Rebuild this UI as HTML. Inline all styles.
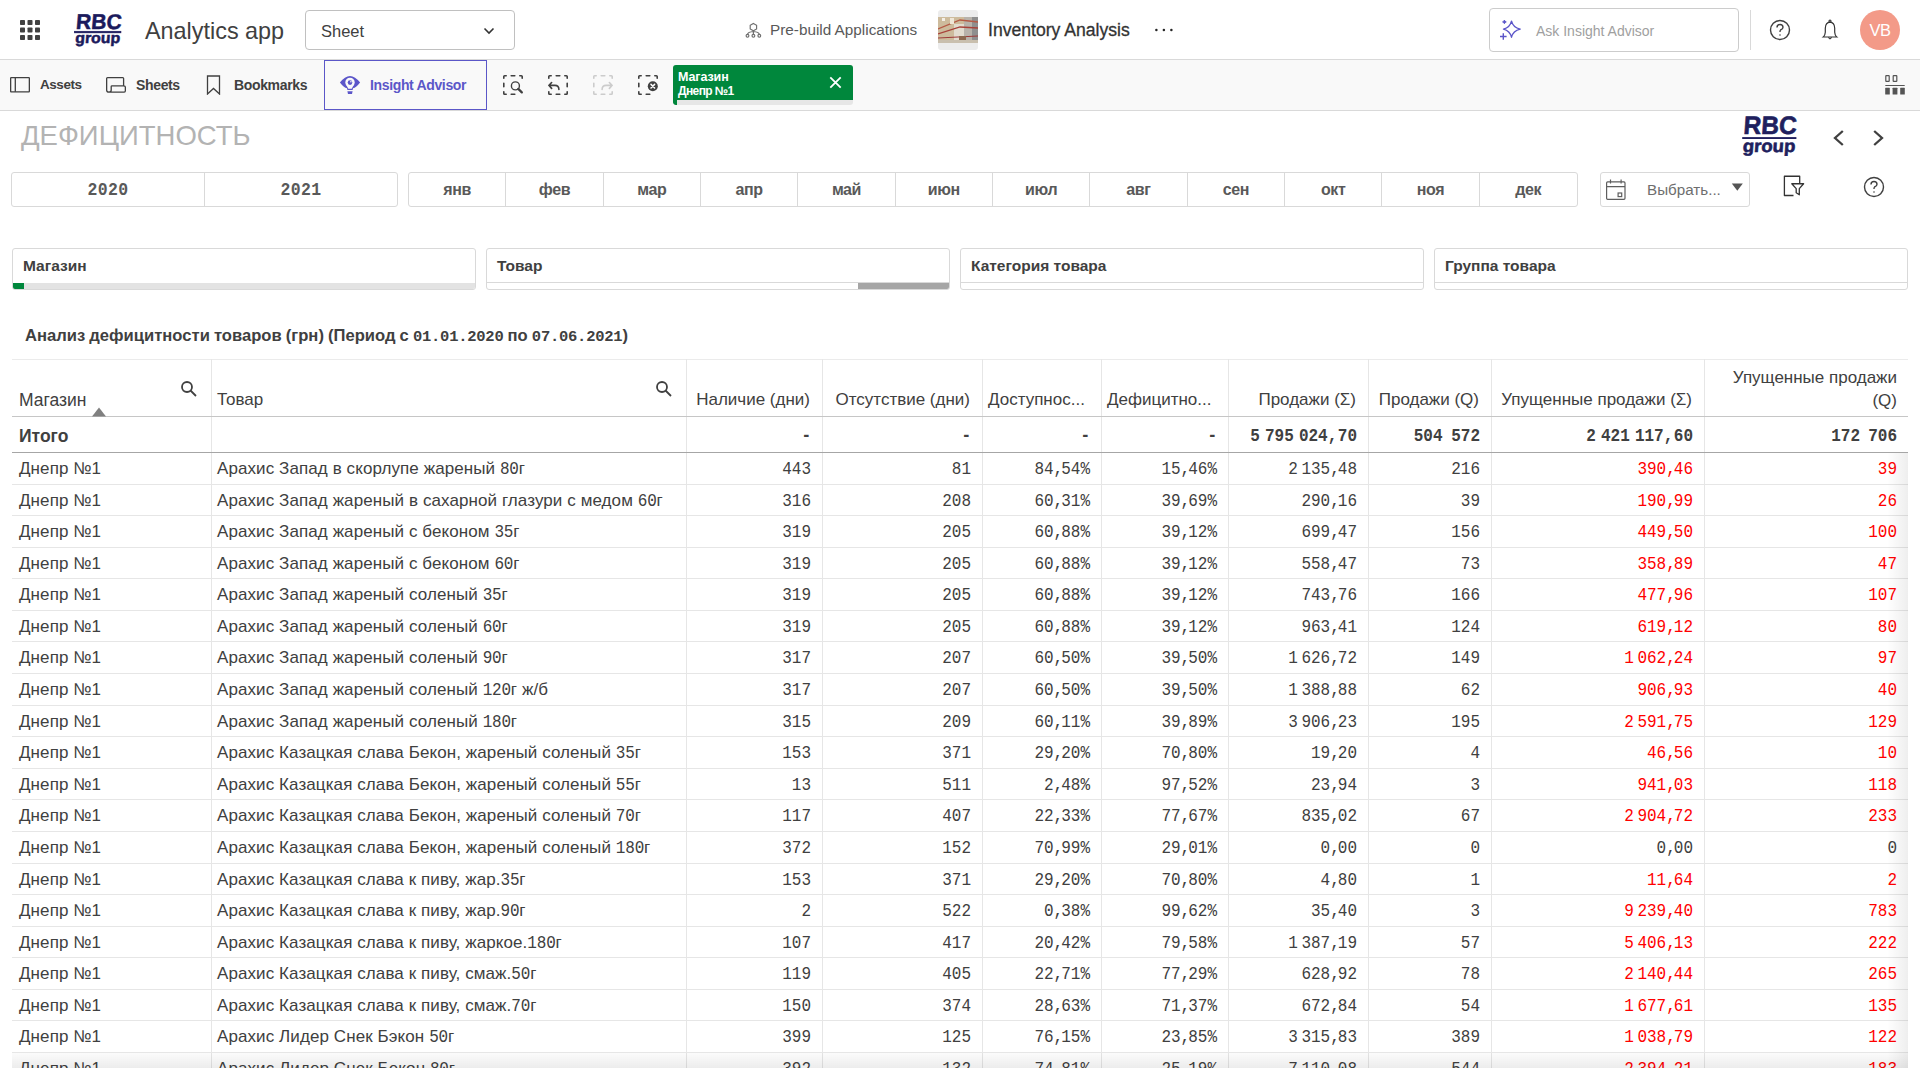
<!DOCTYPE html>
<html><head><meta charset="utf-8">
<style>
*{box-sizing:border-box;margin:0;padding:0}
html,body{width:1920px;height:1080px;overflow:hidden;background:#fff;font-family:"Liberation Sans",sans-serif;color:#404040}
.abs{position:absolute}
.topbar{position:absolute;left:0;top:0;width:1920px;height:60px;background:#fff;border-bottom:1px solid #d9d9d9}
.toolbar{position:absolute;left:0;top:60px;width:1920px;height:51px;background:#f9f9f9;border-bottom:1px solid #d9d9d9}
.tb-item{position:absolute;top:0;height:50px;line-height:50px;font-size:14px;font-weight:700;color:#404040;letter-spacing:-0.35px}
.sel{position:absolute;left:673px;top:65px;width:180px;height:40px;border-radius:3px;overflow:hidden;background:#e6e6e6}
.sel .g{position:absolute;left:0;top:0;width:180px;height:35px;background:#00873c}
.btnrow{position:absolute;top:172px;height:35px;border:1px solid #d9d9d9;border-radius:3px;background:#fff;display:flex}
.btnrow div{height:33px;line-height:33px;text-align:center;font-size:16px;font-weight:700;color:#595959;border-right:1px solid #d9d9d9;letter-spacing:-0.4px}
.btnrow div:last-child{border-right:none}
.fp{position:absolute;top:248px;height:42px;border:1px solid #d9d9d9;border-radius:3px;background:#fff;overflow:hidden}
.fp .lbl{position:absolute;left:10px;top:7.5px;font-size:15.5px;font-weight:700;color:#404040}
.fp .bar{position:absolute;left:0;bottom:0;width:100%;height:6px;background:#e3e3e3}
.hd{position:absolute;top:359px;height:57px;font-size:17px;color:#404040}
.row{position:absolute;left:0;width:1920px;height:31.58px}
.brow{border-bottom:1px solid #ebebeb}
.c{position:absolute;top:0;height:31.58px;line-height:31px;white-space:nowrap;overflow:hidden;font-size:17px;color:#404040}
.t{padding-left:7px;letter-spacing:0.09px}
.n{text-align:right;padding-right:11px;font-family:"Liberation Mono",monospace;font-size:16px}
.n span.v{display:inline-block;transform:scaleY(1.15);position:relative;top:1px}
.tot span.v{top:1.5px}
.r{color:#ff0000}
.dg{font-family:"Liberation Mono",monospace;font-size:16px;display:inline-block;transform:scaleY(1.12);letter-spacing:-0.2px}
.ts{letter-spacing:-6px}
.cm{letter-spacing:-2px}
.tot .ts{letter-spacing:-4.5px}
.tot .cm{letter-spacing:0.5px}
.hline{position:absolute;left:12px;width:1896px;height:1px;background:#e6e6e6}
.vl{position:absolute;top:359px;width:1px;height:709px;background:#e6e6e6}
</style></head><body>

<!-- TOP BAR -->
<div class="topbar"></div>
<svg class="abs" style="left:20px;top:20px" width="20" height="20" viewBox="0 0 20 20" fill="#404040">
<rect x="0" y="0" width="5" height="5" rx="0.8"/><rect x="7.5" y="0" width="5" height="5" rx="0.8"/><rect x="15" y="0" width="5" height="5" rx="0.8"/>
<rect x="0" y="7.5" width="5" height="5" rx="0.8"/><rect x="7.5" y="7.5" width="5" height="5" rx="0.8"/><rect x="15" y="7.5" width="5" height="5" rx="0.8"/>
<rect x="0" y="15" width="5" height="5" rx="0.8"/><rect x="7.5" y="15" width="5" height="5" rx="0.8"/><rect x="15" y="15" width="5" height="5" rx="0.8"/>
</svg>
<svg class="abs" style="left:60px;top:0" width="80" height="60" viewBox="60 0 80 60">
<g fill="#1b1a5c" stroke="#1b1a5c" stroke-width="0.5" font-family="Liberation Sans" font-weight="700">
<text x="75.5" y="28.8" font-size="21.3" textLength="45.5" lengthAdjust="spacingAndGlyphs" transform="skewX(-5) translate(2.6 0)">RBC</text>
<rect x="74.3" y="31.2" width="46.7" height="1.7"/>
<text x="75" y="43.4" font-size="15" textLength="45" lengthAdjust="spacingAndGlyphs" transform="skewX(-4) translate(3 0)">group</text>
</g></svg>
<div class="abs" style="left:145px;top:15px;font-size:23.4px;line-height:32px;color:#404040">Analytics app</div>
<div class="abs" style="left:305px;top:10px;width:210px;height:40px;border:1px solid #c0c0c0;border-radius:4px;background:#fff"></div>
<div class="abs" style="left:321px;top:20px;font-size:16.5px;line-height:22px;color:#404040">Sheet</div>
<svg class="abs" style="left:483px;top:25.7px" width="12" height="10" viewBox="0 0 12 10"><path d="M1.5 2.5 L6 7 L10.5 2.5" stroke="#333" stroke-width="1.6" fill="none"/></svg>

<svg class="abs" style="left:745px;top:21px" width="17" height="18" viewBox="0 0 17 18" fill="none" stroke="#6e6e6e" stroke-width="1.15">
<path d="M8.4 2.5 L11.6 4.3 V8 L8.4 9.8 L5.2 8 V4.3 Z"/><path d="M8.4 9.8 V13.4 M8.4 10.5 Q3 11 2.5 13.4 M8.4 10.5 Q13.8 11 14.3 13.4"/>
<circle cx="2.5" cy="14.8" r="1.4"/><circle cx="8.4" cy="14.8" r="1.4"/><circle cx="14.3" cy="14.8" r="1.4"/>
</svg>
<div class="abs" style="left:770px;top:20px;font-size:15.3px;line-height:20px;color:#595959">Pre-build Applications</div>
<svg class="abs" style="left:938px;top:10px" width="40" height="40" viewBox="0 0 40 40">
<rect x="0" y="0" width="40" height="40" rx="3" fill="#ececec"/>
<rect x="0" y="7" width="40" height="26" fill="#cdbb9c"/>
<rect x="26" y="7" width="14" height="26" fill="#b8b2aa"/>
<rect x="34" y="7" width="6" height="26" fill="#8f8f8f"/>
<rect x="16" y="14" width="10" height="19" fill="#e2dccf"/>
<path d="M0 19 L22 10 L40 12" stroke="#b55a45" stroke-width="1.3" fill="none"/>
<path d="M0 24 L22 17 L40 18" stroke="#a8423a" stroke-width="1.3" fill="none"/>
<path d="M0 28 L40 26" stroke="#9e3b3a" stroke-width="1.1" fill="none"/>
<rect x="21" y="26" width="7" height="7" fill="#8d6a50"/>
<rect x="0" y="30" width="40" height="3" fill="#c9bfae"/>
<rect x="4" y="8" width="3" height="3" fill="#f4efe6"/>
<rect x="12" y="8" width="4" height="6" fill="#efe6d6"/>
</svg>
<div class="abs" style="left:988px;top:19px;font-size:17.6px;line-height:22px;color:#333;-webkit-text-stroke:0.3px #333">Inventory Analysis</div>
<svg class="abs" style="left:1150px;top:25px" width="30" height="10" viewBox="0 0 30 10" fill="#262626"><circle cx="6.4" cy="5" r="1.25"/><circle cx="13.9" cy="5" r="1.25"/><circle cx="21.4" cy="5" r="1.25"/></svg>

<div class="abs" style="left:1489px;top:8px;width:250px;height:44px;border:1px solid #cccccc;border-radius:4px;background:#fff"></div>
<svg class="abs" style="left:1490px;top:10px" width="40" height="40" viewBox="0 0 40 40" fill="none" stroke="#5b55c9" stroke-width="1.4" stroke-linejoin="round">
<path d="M21.5 11.1 Q23.1 17.5 30.2 19.1 Q23.1 20.7 21.5 27.2 Q19.9 20.7 13.5 19.1 Q19.9 17.5 21.5 11.1 Z"/>
<path d="M13.3 23.2 V29.8 M10 26.5 H16.6"/>
<path d="M14.4 10 Q14.7 11.6 16.3 11.9 Q14.7 12.2 14.4 13.8 Q14.1 12.2 12.5 11.9 Q14.1 11.6 14.4 10 Z" fill="#5b55c9" stroke-width="0.8"/>
</svg>
<div class="abs" style="left:1536px;top:21px;font-size:14px;line-height:20px;color:#a0a0a0">Ask Insight Advisor</div>
<div class="abs" style="left:1750px;top:10px;width:1px;height:40px;background:#d9d9d9"></div>
<svg class="abs" style="left:1769px;top:19px" width="22" height="22" viewBox="0 0 22 22" fill="none" stroke="#404040" stroke-width="1.4">
<circle cx="11" cy="11" r="9.5"/><path d="M8 8.5 Q8 5.5 11 5.5 Q14 5.5 14 8.3 Q14 10.2 11.5 11 Q11 11.3 11 13"/><circle cx="11" cy="16" r="0.8" fill="#404040" stroke="none"/>
</svg>
<svg class="abs" style="left:1819px;top:18px" width="22" height="24" viewBox="0 0 22 24" fill="none" stroke="#333" stroke-width="1.2">
<path d="M11 4.2 Q6.6 4.4 6.3 10.2 V14.3 Q6.1 17.6 4.3 19 H17.7 Q15.9 17.6 15.7 14.3 V10.2 Q15.4 4.4 11 4.2 Z"/><ellipse cx="11" cy="3.2" rx="1" ry="1.2"/><path d="M9.5 19.3 Q11 22.3 12.5 19.3"/>
</svg>
<div class="abs" style="left:1860px;top:10px;width:40px;height:40px;border-radius:20px;background:#f39a88;color:#fff;font-size:16.5px;line-height:40px;text-align:center;letter-spacing:-0.5px">VB</div>

<!-- TOOLBAR -->
<div class="toolbar"></div>
<svg class="abs" style="left:10px;top:77px" width="20" height="16" viewBox="0 0 20 16" fill="none" stroke="#404040" stroke-width="1.3"><rect x="0.65" y="0.65" width="18.7" height="14.2" rx="0.6"/><path d="M5.3 0.65 V14.85"/></svg>
<div class="tb-item" style="left:40px;top:60px;font-size:13.5px;letter-spacing:-0.45px">Assets</div>
<svg class="abs" style="left:106px;top:77px" width="20" height="16" viewBox="0 0 20 16" fill="none" stroke="#404040" stroke-width="1.3"><path d="M0.65 13.3 V1.5 Q0.65 0.65 1.5 0.65 H16.8 Q17.6 0.65 17.6 1.5 V8.8 H6 Q5.2 8.8 5.2 9.6 V13.3 Q5.2 15.1 2.9 15.1 Q0.65 15.1 0.65 13.3 Z M2.9 15.1 H18.2 Q19.35 15.1 19.35 13.8 V10 Q19.35 8.8 17.6 8.8"/></svg>
<div class="tb-item" style="left:136px;top:60px">Sheets</div>
<svg class="abs" style="left:206px;top:75px" width="15" height="20" viewBox="0 0 15 20" fill="none" stroke="#404040" stroke-width="1.3"><path d="M1.5 1 H13.5 V19 L7.5 13.5 L1.5 19 Z"/></svg>
<div class="tb-item" style="left:234px;top:60px">Bookmarks</div>
<div class="abs" style="left:324px;top:60px;width:163px;height:50px;border:1px solid #5b57c8;background:#f9f9f9"></div>
<svg class="abs" style="left:335px;top:72px" width="30" height="26" viewBox="0 0 30 26">
<path d="M4.9 10.5 Q10 3.9 15 3.9 Q20 3.9 25.1 10.5 Q21.2 15.6 18 16.3 L17.6 17.9 H12.4 L12 16.3 Q8.8 15.6 4.9 10.5 Z" fill="#5b55c9"/>
<circle cx="15" cy="10.4" r="4.7" fill="#f9f9f9"/><path d="M11.3 13 L13.3 16.7 H16.7 L18.7 13 Z" fill="#f9f9f9"/>
<circle cx="15" cy="10.6" r="2.3" fill="#5b55c9"/><circle cx="15.9" cy="9.7" r="0.8" fill="#f9f9f9"/>
<path d="M12.4 19.2 H17.6 L17 22 H13 Z" fill="#5b55c9"/>
</svg>
<div class="tb-item" style="left:370px;top:60px;color:#5b57c8">Insight Advisor</div>

<svg class="abs" style="left:503px;top:75px" width="20" height="20" viewBox="0 0 20 20" fill="none" stroke="#404040" stroke-width="1.6" stroke-linecap="round">
<path d="M0.8 3.2 V1.6 Q0.8 0.8 1.6 0.8 H3.2 M8.2 0.8 H11.8 M16.8 0.8 H18.4 Q19.2 0.8 19.2 1.6 V3.2 M11.8 19.2 H8.2 M3.2 19.2 H1.6 Q0.8 19.2 0.8 18.4 V16.8 M0.8 11.8 V8.2 "/><circle cx="12.4" cy="10.9" r="4" stroke-width="1.4"/><path d="M15.3 13.9 L18.8 17.4" stroke-width="2.2"/></svg>
<svg class="abs" style="left:548px;top:75px" width="20" height="20" viewBox="0 0 20 20" fill="none" stroke="#404040" stroke-width="1.6" stroke-linecap="round">
<path d="M0.8 3.2 V1.6 Q0.8 0.8 1.6 0.8 H3.2 M8.2 0.8 H11.8 M16.8 0.8 H18.4 Q19.2 0.8 19.2 1.6 V3.2 M19.2 8.2 V11.8 M19.2 16.8 V18.4 Q19.2 19.2 18.4 19.2 H16.8 M11.8 19.2 H8.2 M3.2 19.2 H1.6 Q0.8 19.2 0.8 18.4 V16.8 "/><path d="M3.6 7.5 L0.9 10.4 L3.6 13.4 M0.9 10.4 H7 Q10.8 10.4 10.9 14.4"/></svg>
<svg class="abs" style="left:593px;top:75px" width="20" height="20" viewBox="0 0 20 20" fill="none" stroke="#cccccc" stroke-width="1.6" stroke-linecap="round">
<path d="M0.8 3.2 V1.6 Q0.8 0.8 1.6 0.8 H3.2 M8.2 0.8 H11.8 M16.8 0.8 H18.4 Q19.2 0.8 19.2 1.6 V3.2 M19.2 16.8 V18.4 Q19.2 19.2 18.4 19.2 H16.8 M11.8 19.2 H8.2 M3.2 19.2 H1.6 Q0.8 19.2 0.8 18.4 V16.8 M0.8 11.8 V8.2 "/><path d="M16.4 7.5 L19.1 10.4 L16.4 13.4 M19.1 10.4 H13 Q9.2 10.4 9.1 14.4"/></svg>
<svg class="abs" style="left:638px;top:75px" width="22" height="22" viewBox="0 0 22 22" fill="none" stroke="#404040" stroke-width="1.6" stroke-linecap="round">
<path d="M0.8 3.2 V1.6 Q0.8 0.8 1.6 0.8 H3.2 M8.2 0.8 H11.8 M16.8 0.8 H18.4 Q19.2 0.8 19.2 1.6 V3.2 M11.8 19.2 H8.2 M3.2 19.2 H1.6 Q0.8 19.2 0.8 18.4 V16.8 M0.8 11.8 V8.2 "/><circle cx="14.8" cy="11.2" r="5" fill="#404040" stroke="none"/><path d="M13 9.4 L16.6 13 M16.6 9.4 L13 13" stroke="#fff" stroke-width="1.5"/></svg>
<div class="sel"><div class="g"></div><div class="abs" style="left:0;top:35px;width:4px;height:5px;background:#00873c;border-radius:0 0 0 2px"></div></div>
<div class="abs" style="left:678px;top:70px;font-size:12.5px;line-height:15px;font-weight:700;color:#fff;letter-spacing:-0.1px">Магазин</div>
<div class="abs" style="left:678px;top:84px;font-size:12px;line-height:14px;font-weight:700;color:#fff;letter-spacing:-0.6px">Днепр №1</div>
<svg class="abs" style="left:829px;top:76px" width="13" height="13" viewBox="0 0 13 13" stroke="#fff" stroke-width="1.8"><path d="M1.3 1.3 L11.7 11.7 M11.7 1.3 L1.3 11.7"/></svg>

<svg class="abs" style="left:1884px;top:75px" width="22" height="21" viewBox="0 0 22 21" fill="#555">
<rect x="1.8" y="0.6" width="3.4" height="5.8" rx="0.5" fill="none" stroke="#555" stroke-width="1.2"/><rect x="9.2" y="0.6" width="3.6" height="5.8" rx="0.5" fill="none" stroke="#555" stroke-width="1.2"/>
<rect x="1.2" y="9.9" width="19.6" height="1.2" rx="0.5"/><rect x="1.2" y="12.8" width="4.6" height="6.8" rx="0.4"/><rect x="8.6" y="12.8" width="4.8" height="6.8" rx="0.4"/><rect x="16.2" y="12.8" width="4.6" height="6.8" rx="0.4"/>
</svg>

<!-- SHEET HEADER -->
<div class="abs" style="left:21px;top:119px;font-size:27.5px;line-height:34px;color:#b3b3b3">ДЕФИЦИТНОСТЬ</div>
<svg class="abs" style="left:1730px;top:110px" width="80" height="55" viewBox="1730 110 80 55">
<g fill="#201f5e" stroke="#201f5e" stroke-width="0.6" font-family="Liberation Sans" font-weight="700">
<text x="1743" y="134.2" font-size="25.2" textLength="53.3" lengthAdjust="spacingAndGlyphs" transform="translate(9.38 0) skewX(-4)">RBC</text>
<rect x="1742.2" y="137.1" width="54.2" height="1.9" stroke="none"/>
<text x="1742.5" y="151.7" font-size="17.5" textLength="52.5" lengthAdjust="spacingAndGlyphs" transform="skewX(-4) translate(10.6 0)">group</text>
</g></svg>
<svg class="abs" style="left:1830px;top:128px" width="18" height="20" viewBox="0 0 18 20" fill="none" stroke="#404040" stroke-width="2.3"><path d="M12.8 3 L5 10 L12.8 17"/></svg>
<svg class="abs" style="left:1869px;top:128px" width="18" height="20" viewBox="0 0 18 20" fill="none" stroke="#404040" stroke-width="2.3"><path d="M5.2 3 L13 10 L5.2 17"/></svg>

<div class="btnrow" style="left:11px;width:387px">
 <div style="width:193px;font-family:'Liberation Mono';font-size:16.5px;padding-top:0px;letter-spacing:0.4px"><span style="display:inline-block;transform:scaleY(1.12)">2020</span></div><div style="width:192px;font-family:'Liberation Mono';font-size:16.5px;padding-top:0px;letter-spacing:0.4px"><span style="display:inline-block;transform:scaleY(1.12)">2021</span></div>
</div>
<div class="btnrow" style="left:408px;width:1170px">
 <div style="width:97.5px">янв</div><div style="width:97.5px">фев</div><div style="width:97.5px">мар</div><div style="width:97.5px">апр</div><div style="width:97.5px">май</div><div style="width:97.5px">июн</div><div style="width:97.5px">июл</div><div style="width:97.5px">авг</div><div style="width:97.5px">сен</div><div style="width:97.5px">окт</div><div style="width:97.5px">ноя</div><div style="width:97.5px">дек</div>
</div>
<div class="abs" style="left:1600px;top:172px;width:150px;height:35px;border:1px solid #d9d9d9;border-radius:3px;background:#fff"></div>
<svg class="abs" style="left:1605px;top:179px" width="22" height="22" viewBox="0 0 22 22" fill="none" stroke="#5e5e5e" stroke-width="1.2"><rect x="1.6" y="2.9" width="18.4" height="17.4" rx="1"/><path d="M1.6 7.6 H20 M5.5 0.6 V4.5 M16.1 0.6 V4.5"/><rect x="13.1" y="14" width="3.6" height="3.6"/></svg>
<div class="abs" style="left:1647px;top:179.5px;font-size:15.2px;line-height:20px;color:#6e6e6e">Выбрать...</div>
<svg class="abs" style="left:1731px;top:183px" width="12" height="9" viewBox="0 0 12 9" fill="#555"><path d="M0.8 0.4 H11.8 L6.3 7.8 Z"/></svg>
<svg class="abs" style="left:1783px;top:175px" width="22" height="22" viewBox="0 0 22 22" fill="none" stroke="#333" stroke-width="1.3" stroke-linejoin="round"><path d="M16.7 8.6 V1.25 H1.4 V20.5 H10.5"/><path d="M8.8 8.75 H20.6 L16.3 13.6 V19.8 L13.2 17.8 V13.6 Z"/></svg>
<svg class="abs" style="left:1863px;top:176px" width="22" height="22" viewBox="0 0 22 22" fill="none" stroke="#404040" stroke-width="1.4">
<circle cx="11" cy="11" r="9.5"/><path d="M8 8.5 Q8 5.5 11 5.5 Q14 5.5 14 8.3 Q14 10.2 11.5 11 Q11 11.3 11 13"/><circle cx="11" cy="16" r="0.8" fill="#404040" stroke="none"/>
</svg>

<!-- FILTER PANES -->
<div class="fp" style="left:12px;width:464px"><div class="lbl">Магазин</div><div class="bar"></div><div class="abs" style="left:0;bottom:0;width:11px;height:6px;background:#00873c"></div></div>
<div class="fp" style="left:486px;width:464px"><div class="lbl">Товар</div><div class="abs" style="left:0;bottom:6px;width:100%;height:1px;background:#d9d9d9"></div><div class="abs" style="left:371px;bottom:0;width:92px;height:6px;background:#a6a6a6"></div></div>
<div class="fp" style="left:960px;width:464px"><div class="lbl">Категория товара</div><div class="abs" style="left:0;bottom:6px;width:100%;height:1px;background:#d9d9d9"></div></div>
<div class="fp" style="left:1434px;width:474px"><div class="lbl">Группа товара</div><div class="abs" style="left:0;bottom:6px;width:100%;height:1px;background:#d9d9d9"></div></div>

<!-- TABLE -->
<div class="abs" style="left:25px;top:324.5px;font-size:16.6px;line-height:22px;font-weight:700;color:#404040;word-spacing:-0.5px">Анализ дефицитности товаров (грн) (Период с <span style="font-family:'Liberation Mono';font-size:15.5px;letter-spacing:-0.25px">01.01.2020</span> по <span style="font-family:'Liberation Mono';font-size:15.5px;letter-spacing:-0.25px">07.06.2021</span>)</div>

<div class="hline" style="top:359px;background:#ebebeb"></div>
<div class="vl" style="left:211px"></div><div class="vl" style="left:686px"></div><div class="vl" style="left:822px"></div><div class="vl" style="left:982px"></div><div class="vl" style="left:1101px"></div><div class="vl" style="left:1228px"></div><div class="vl" style="left:1368px"></div><div class="vl" style="left:1491px"></div><div class="vl" style="left:1704px"></div>
<div class="hline" style="top:416px;background:#c6c6c6"></div>
<div class="hline" style="top:452px;background:#a6a6a6"></div>

<div class="abs" style="left:19px;top:390px;font-size:17.5px;line-height:20px">Магазин</div>
<svg class="abs" style="left:92px;top:407px" width="14" height="10" viewBox="0 0 14 10" fill="#808080"><path d="M0 9.5 L7 0.5 L14 9.5 Z"/></svg>
<svg class="abs" style="left:180px;top:380px" width="18" height="18" viewBox="0 0 18 18" fill="none" stroke="#404040" stroke-width="1.8"><circle cx="7" cy="7" r="5"/><path d="M10.5 10.5 L16 16"/></svg>
<div class="abs" style="left:217px;top:390px;font-size:17px;line-height:20px">Товар</div>
<svg class="abs" style="left:655px;top:380px" width="18" height="18" viewBox="0 0 18 18" fill="none" stroke="#404040" stroke-width="1.8"><circle cx="7" cy="7" r="5"/><path d="M10.5 10.5 L16 16"/></svg>
<div class="abs" style="left:686px;top:390px;width:136px;padding-right:12px;text-align:right;font-size:17px;line-height:20px">Наличие (дни)</div>
<div class="abs" style="left:822px;top:390px;width:160px;padding-right:12px;text-align:right;font-size:17px;line-height:20px">Отсутствие (дни)</div>
<div class="abs" style="left:982px;top:390px;width:119px;padding-left:6px;font-size:17px;line-height:20px;white-space:nowrap">Доступнос...</div>
<div class="abs" style="left:1101px;top:390px;width:127px;padding-left:6px;font-size:17px;line-height:20px;white-space:nowrap">Дефицитно...</div>
<div class="abs" style="left:1228px;top:390px;width:140px;padding-right:12px;text-align:right;font-size:17px;line-height:20px">Продажи (Σ)</div>
<div class="abs" style="left:1368px;top:390px;width:123px;padding-right:12px;text-align:right;font-size:17px;line-height:20px">Продажи (Q)</div>
<div class="abs" style="left:1491px;top:390px;width:213px;padding-right:12px;text-align:right;font-size:17px;line-height:20px">Упущенные продажи (Σ)</div>
<div class="abs" style="left:1704px;top:366px;width:204px;padding-right:11px;text-align:right;font-size:17px;line-height:23px">Упущенные продажи<br>(Q)</div>

<div class="abs" style="left:19px;top:426px;font-size:17.5px;line-height:20px;font-weight:700">Итого</div>
<div class="row tot" style="top:417px;height:35px;left:0">
<div class="c n" style="left:686px;width:136px;height:35px;line-height:35px;font-weight:700"><span class="v">-</span></div>
<div class="c n" style="left:822px;width:160px;height:35px;line-height:35px;font-weight:700"><span class="v">-</span></div>
<div class="c n" style="left:982px;width:119px;height:35px;line-height:35px;font-weight:700"><span class="v">-</span></div>
<div class="c n" style="left:1101px;width:127px;height:35px;line-height:35px;font-weight:700"><span class="v">-</span></div>
<div class="c n" style="left:1228px;width:140px;height:35px;line-height:35px;font-weight:700"><span class="v">5<span class="ts"> </span>795<span class="ts"> </span>024<span class="cm">,</span>70</span></div>
<div class="c n" style="left:1368px;width:123px;height:35px;line-height:35px;font-weight:700"><span class="v">504<span class="ts" style="letter-spacing:-1px"> </span>572</span></div>
<div class="c n" style="left:1491px;width:213px;height:35px;line-height:35px;font-weight:700"><span class="v">2<span class="ts"> </span>421<span class="ts"> </span>117<span class="cm">,</span>60</span></div>
<div class="c n" style="left:1704px;width:204px;height:35px;line-height:35px;font-weight:700"><span class="v">172<span class="ts" style="letter-spacing:-1.5px"> </span>706</span></div>
</div>

<div class="abs" style="left:0;top:0;width:1920px;height:1068px;overflow:hidden">
<div class="row" style="top:453.00px"><div class="c t" style="left:12px;width:199px">Днепр №1</div><div class="c t" style="left:211px;width:475px;padding-left:6px">Арахис Запад в скорлупе жареный <span class="dg">80</span>г</div><div class="c n" style="left:686px;width:136px"><span class="v">443</span></div><div class="c n" style="left:822px;width:160px"><span class="v">81</span></div><div class="c n" style="left:982px;width:119px"><span class="v">84<span class="cm">,</span>54%</span></div><div class="c n" style="left:1101px;width:127px"><span class="v">15<span class="cm">,</span>46%</span></div><div class="c n" style="left:1228px;width:140px"><span class="v">2<span class="ts"> </span>135<span class="cm">,</span>48</span></div><div class="c n" style="left:1368px;width:123px"><span class="v">216</span></div><div class="c n r" style="left:1491px;width:213px"><span class="v">390<span class="cm">,</span>46</span></div><div class="c n r" style="left:1704px;width:204px"><span class="v">39</span></div></div>
<div class="hline" style="top:483.58px"></div>
<div class="row" style="top:484.58px"><div class="c t" style="left:12px;width:199px">Днепр №1</div><div class="c t" style="left:211px;width:475px;padding-left:6px">Арахис Запад жареный в сахарной глазури с медом <span class="dg">60</span>г</div><div class="c n" style="left:686px;width:136px"><span class="v">316</span></div><div class="c n" style="left:822px;width:160px"><span class="v">208</span></div><div class="c n" style="left:982px;width:119px"><span class="v">60<span class="cm">,</span>31%</span></div><div class="c n" style="left:1101px;width:127px"><span class="v">39<span class="cm">,</span>69%</span></div><div class="c n" style="left:1228px;width:140px"><span class="v">290<span class="cm">,</span>16</span></div><div class="c n" style="left:1368px;width:123px"><span class="v">39</span></div><div class="c n r" style="left:1491px;width:213px"><span class="v">190<span class="cm">,</span>99</span></div><div class="c n r" style="left:1704px;width:204px"><span class="v">26</span></div></div>
<div class="hline" style="top:515.16px"></div>
<div class="row" style="top:516.16px"><div class="c t" style="left:12px;width:199px">Днепр №1</div><div class="c t" style="left:211px;width:475px;padding-left:6px">Арахис Запад жареный с беконом <span class="dg">35</span>г</div><div class="c n" style="left:686px;width:136px"><span class="v">319</span></div><div class="c n" style="left:822px;width:160px"><span class="v">205</span></div><div class="c n" style="left:982px;width:119px"><span class="v">60<span class="cm">,</span>88%</span></div><div class="c n" style="left:1101px;width:127px"><span class="v">39<span class="cm">,</span>12%</span></div><div class="c n" style="left:1228px;width:140px"><span class="v">699<span class="cm">,</span>47</span></div><div class="c n" style="left:1368px;width:123px"><span class="v">156</span></div><div class="c n r" style="left:1491px;width:213px"><span class="v">449<span class="cm">,</span>50</span></div><div class="c n r" style="left:1704px;width:204px"><span class="v">100</span></div></div>
<div class="hline" style="top:546.74px"></div>
<div class="row" style="top:547.74px"><div class="c t" style="left:12px;width:199px">Днепр №1</div><div class="c t" style="left:211px;width:475px;padding-left:6px">Арахис Запад жареный с беконом <span class="dg">60</span>г</div><div class="c n" style="left:686px;width:136px"><span class="v">319</span></div><div class="c n" style="left:822px;width:160px"><span class="v">205</span></div><div class="c n" style="left:982px;width:119px"><span class="v">60<span class="cm">,</span>88%</span></div><div class="c n" style="left:1101px;width:127px"><span class="v">39<span class="cm">,</span>12%</span></div><div class="c n" style="left:1228px;width:140px"><span class="v">558<span class="cm">,</span>47</span></div><div class="c n" style="left:1368px;width:123px"><span class="v">73</span></div><div class="c n r" style="left:1491px;width:213px"><span class="v">358<span class="cm">,</span>89</span></div><div class="c n r" style="left:1704px;width:204px"><span class="v">47</span></div></div>
<div class="hline" style="top:578.32px"></div>
<div class="row" style="top:579.32px"><div class="c t" style="left:12px;width:199px">Днепр №1</div><div class="c t" style="left:211px;width:475px;padding-left:6px">Арахис Запад жареный соленый <span class="dg">35</span>г</div><div class="c n" style="left:686px;width:136px"><span class="v">319</span></div><div class="c n" style="left:822px;width:160px"><span class="v">205</span></div><div class="c n" style="left:982px;width:119px"><span class="v">60<span class="cm">,</span>88%</span></div><div class="c n" style="left:1101px;width:127px"><span class="v">39<span class="cm">,</span>12%</span></div><div class="c n" style="left:1228px;width:140px"><span class="v">743<span class="cm">,</span>76</span></div><div class="c n" style="left:1368px;width:123px"><span class="v">166</span></div><div class="c n r" style="left:1491px;width:213px"><span class="v">477<span class="cm">,</span>96</span></div><div class="c n r" style="left:1704px;width:204px"><span class="v">107</span></div></div>
<div class="hline" style="top:609.90px"></div>
<div class="row" style="top:610.90px"><div class="c t" style="left:12px;width:199px">Днепр №1</div><div class="c t" style="left:211px;width:475px;padding-left:6px">Арахис Запад жареный соленый <span class="dg">60</span>г</div><div class="c n" style="left:686px;width:136px"><span class="v">319</span></div><div class="c n" style="left:822px;width:160px"><span class="v">205</span></div><div class="c n" style="left:982px;width:119px"><span class="v">60<span class="cm">,</span>88%</span></div><div class="c n" style="left:1101px;width:127px"><span class="v">39<span class="cm">,</span>12%</span></div><div class="c n" style="left:1228px;width:140px"><span class="v">963<span class="cm">,</span>41</span></div><div class="c n" style="left:1368px;width:123px"><span class="v">124</span></div><div class="c n r" style="left:1491px;width:213px"><span class="v">619<span class="cm">,</span>12</span></div><div class="c n r" style="left:1704px;width:204px"><span class="v">80</span></div></div>
<div class="hline" style="top:641.48px"></div>
<div class="row" style="top:642.48px"><div class="c t" style="left:12px;width:199px">Днепр №1</div><div class="c t" style="left:211px;width:475px;padding-left:6px">Арахис Запад жареный соленый <span class="dg">90</span>г</div><div class="c n" style="left:686px;width:136px"><span class="v">317</span></div><div class="c n" style="left:822px;width:160px"><span class="v">207</span></div><div class="c n" style="left:982px;width:119px"><span class="v">60<span class="cm">,</span>50%</span></div><div class="c n" style="left:1101px;width:127px"><span class="v">39<span class="cm">,</span>50%</span></div><div class="c n" style="left:1228px;width:140px"><span class="v">1<span class="ts"> </span>626<span class="cm">,</span>72</span></div><div class="c n" style="left:1368px;width:123px"><span class="v">149</span></div><div class="c n r" style="left:1491px;width:213px"><span class="v">1<span class="ts"> </span>062<span class="cm">,</span>24</span></div><div class="c n r" style="left:1704px;width:204px"><span class="v">97</span></div></div>
<div class="hline" style="top:673.06px"></div>
<div class="row" style="top:674.06px"><div class="c t" style="left:12px;width:199px">Днепр №1</div><div class="c t" style="left:211px;width:475px;padding-left:6px">Арахис Запад жареный соленый <span class="dg">120</span>г ж/б</div><div class="c n" style="left:686px;width:136px"><span class="v">317</span></div><div class="c n" style="left:822px;width:160px"><span class="v">207</span></div><div class="c n" style="left:982px;width:119px"><span class="v">60<span class="cm">,</span>50%</span></div><div class="c n" style="left:1101px;width:127px"><span class="v">39<span class="cm">,</span>50%</span></div><div class="c n" style="left:1228px;width:140px"><span class="v">1<span class="ts"> </span>388<span class="cm">,</span>88</span></div><div class="c n" style="left:1368px;width:123px"><span class="v">62</span></div><div class="c n r" style="left:1491px;width:213px"><span class="v">906<span class="cm">,</span>93</span></div><div class="c n r" style="left:1704px;width:204px"><span class="v">40</span></div></div>
<div class="hline" style="top:704.64px"></div>
<div class="row" style="top:705.64px"><div class="c t" style="left:12px;width:199px">Днепр №1</div><div class="c t" style="left:211px;width:475px;padding-left:6px">Арахис Запад жареный соленый <span class="dg">180</span>г</div><div class="c n" style="left:686px;width:136px"><span class="v">315</span></div><div class="c n" style="left:822px;width:160px"><span class="v">209</span></div><div class="c n" style="left:982px;width:119px"><span class="v">60<span class="cm">,</span>11%</span></div><div class="c n" style="left:1101px;width:127px"><span class="v">39<span class="cm">,</span>89%</span></div><div class="c n" style="left:1228px;width:140px"><span class="v">3<span class="ts"> </span>906<span class="cm">,</span>23</span></div><div class="c n" style="left:1368px;width:123px"><span class="v">195</span></div><div class="c n r" style="left:1491px;width:213px"><span class="v">2<span class="ts"> </span>591<span class="cm">,</span>75</span></div><div class="c n r" style="left:1704px;width:204px"><span class="v">129</span></div></div>
<div class="hline" style="top:736.22px"></div>
<div class="row" style="top:737.22px"><div class="c t" style="left:12px;width:199px">Днепр №1</div><div class="c t" style="left:211px;width:475px;padding-left:6px">Арахис Казацкая слава Бекон, жареный соленый <span class="dg">35</span>г</div><div class="c n" style="left:686px;width:136px"><span class="v">153</span></div><div class="c n" style="left:822px;width:160px"><span class="v">371</span></div><div class="c n" style="left:982px;width:119px"><span class="v">29<span class="cm">,</span>20%</span></div><div class="c n" style="left:1101px;width:127px"><span class="v">70<span class="cm">,</span>80%</span></div><div class="c n" style="left:1228px;width:140px"><span class="v">19<span class="cm">,</span>20</span></div><div class="c n" style="left:1368px;width:123px"><span class="v">4</span></div><div class="c n r" style="left:1491px;width:213px"><span class="v">46<span class="cm">,</span>56</span></div><div class="c n r" style="left:1704px;width:204px"><span class="v">10</span></div></div>
<div class="hline" style="top:767.80px"></div>
<div class="row" style="top:768.80px"><div class="c t" style="left:12px;width:199px">Днепр №1</div><div class="c t" style="left:211px;width:475px;padding-left:6px">Арахис Казацкая слава Бекон, жареный соленый <span class="dg">55</span>г</div><div class="c n" style="left:686px;width:136px"><span class="v">13</span></div><div class="c n" style="left:822px;width:160px"><span class="v">511</span></div><div class="c n" style="left:982px;width:119px"><span class="v">2<span class="cm">,</span>48%</span></div><div class="c n" style="left:1101px;width:127px"><span class="v">97<span class="cm">,</span>52%</span></div><div class="c n" style="left:1228px;width:140px"><span class="v">23<span class="cm">,</span>94</span></div><div class="c n" style="left:1368px;width:123px"><span class="v">3</span></div><div class="c n r" style="left:1491px;width:213px"><span class="v">941<span class="cm">,</span>03</span></div><div class="c n r" style="left:1704px;width:204px"><span class="v">118</span></div></div>
<div class="hline" style="top:799.38px"></div>
<div class="row" style="top:800.38px"><div class="c t" style="left:12px;width:199px">Днепр №1</div><div class="c t" style="left:211px;width:475px;padding-left:6px">Арахис Казацкая слава Бекон, жареный соленый <span class="dg">70</span>г</div><div class="c n" style="left:686px;width:136px"><span class="v">117</span></div><div class="c n" style="left:822px;width:160px"><span class="v">407</span></div><div class="c n" style="left:982px;width:119px"><span class="v">22<span class="cm">,</span>33%</span></div><div class="c n" style="left:1101px;width:127px"><span class="v">77<span class="cm">,</span>67%</span></div><div class="c n" style="left:1228px;width:140px"><span class="v">835<span class="cm">,</span>02</span></div><div class="c n" style="left:1368px;width:123px"><span class="v">67</span></div><div class="c n r" style="left:1491px;width:213px"><span class="v">2<span class="ts"> </span>904<span class="cm">,</span>72</span></div><div class="c n r" style="left:1704px;width:204px"><span class="v">233</span></div></div>
<div class="hline" style="top:830.96px"></div>
<div class="row" style="top:831.96px"><div class="c t" style="left:12px;width:199px">Днепр №1</div><div class="c t" style="left:211px;width:475px;padding-left:6px">Арахис Казацкая слава Бекон, жареный соленый <span class="dg">180</span>г</div><div class="c n" style="left:686px;width:136px"><span class="v">372</span></div><div class="c n" style="left:822px;width:160px"><span class="v">152</span></div><div class="c n" style="left:982px;width:119px"><span class="v">70<span class="cm">,</span>99%</span></div><div class="c n" style="left:1101px;width:127px"><span class="v">29<span class="cm">,</span>01%</span></div><div class="c n" style="left:1228px;width:140px"><span class="v">0<span class="cm">,</span>00</span></div><div class="c n" style="left:1368px;width:123px"><span class="v">0</span></div><div class="c n" style="left:1491px;width:213px"><span class="v">0<span class="cm">,</span>00</span></div><div class="c n" style="left:1704px;width:204px"><span class="v">0</span></div></div>
<div class="hline" style="top:862.54px"></div>
<div class="row" style="top:863.54px"><div class="c t" style="left:12px;width:199px">Днепр №1</div><div class="c t" style="left:211px;width:475px;padding-left:6px">Арахис Казацкая слава к пиву, жар.<span class="dg">35</span>г</div><div class="c n" style="left:686px;width:136px"><span class="v">153</span></div><div class="c n" style="left:822px;width:160px"><span class="v">371</span></div><div class="c n" style="left:982px;width:119px"><span class="v">29<span class="cm">,</span>20%</span></div><div class="c n" style="left:1101px;width:127px"><span class="v">70<span class="cm">,</span>80%</span></div><div class="c n" style="left:1228px;width:140px"><span class="v">4<span class="cm">,</span>80</span></div><div class="c n" style="left:1368px;width:123px"><span class="v">1</span></div><div class="c n r" style="left:1491px;width:213px"><span class="v">11<span class="cm">,</span>64</span></div><div class="c n r" style="left:1704px;width:204px"><span class="v">2</span></div></div>
<div class="hline" style="top:894.12px"></div>
<div class="row" style="top:895.12px"><div class="c t" style="left:12px;width:199px">Днепр №1</div><div class="c t" style="left:211px;width:475px;padding-left:6px">Арахис Казацкая слава к пиву, жар.<span class="dg">90</span>г</div><div class="c n" style="left:686px;width:136px"><span class="v">2</span></div><div class="c n" style="left:822px;width:160px"><span class="v">522</span></div><div class="c n" style="left:982px;width:119px"><span class="v">0<span class="cm">,</span>38%</span></div><div class="c n" style="left:1101px;width:127px"><span class="v">99<span class="cm">,</span>62%</span></div><div class="c n" style="left:1228px;width:140px"><span class="v">35<span class="cm">,</span>40</span></div><div class="c n" style="left:1368px;width:123px"><span class="v">3</span></div><div class="c n r" style="left:1491px;width:213px"><span class="v">9<span class="ts"> </span>239<span class="cm">,</span>40</span></div><div class="c n r" style="left:1704px;width:204px"><span class="v">783</span></div></div>
<div class="hline" style="top:925.70px"></div>
<div class="row" style="top:926.70px"><div class="c t" style="left:12px;width:199px">Днепр №1</div><div class="c t" style="left:211px;width:475px;padding-left:6px">Арахис Казацкая слава к пиву, жаркое.<span class="dg">180</span>г</div><div class="c n" style="left:686px;width:136px"><span class="v">107</span></div><div class="c n" style="left:822px;width:160px"><span class="v">417</span></div><div class="c n" style="left:982px;width:119px"><span class="v">20<span class="cm">,</span>42%</span></div><div class="c n" style="left:1101px;width:127px"><span class="v">79<span class="cm">,</span>58%</span></div><div class="c n" style="left:1228px;width:140px"><span class="v">1<span class="ts"> </span>387<span class="cm">,</span>19</span></div><div class="c n" style="left:1368px;width:123px"><span class="v">57</span></div><div class="c n r" style="left:1491px;width:213px"><span class="v">5<span class="ts"> </span>406<span class="cm">,</span>13</span></div><div class="c n r" style="left:1704px;width:204px"><span class="v">222</span></div></div>
<div class="hline" style="top:957.28px"></div>
<div class="row" style="top:958.28px"><div class="c t" style="left:12px;width:199px">Днепр №1</div><div class="c t" style="left:211px;width:475px;padding-left:6px">Арахис Казацкая слава к пиву, смаж.<span class="dg">50</span>г</div><div class="c n" style="left:686px;width:136px"><span class="v">119</span></div><div class="c n" style="left:822px;width:160px"><span class="v">405</span></div><div class="c n" style="left:982px;width:119px"><span class="v">22<span class="cm">,</span>71%</span></div><div class="c n" style="left:1101px;width:127px"><span class="v">77<span class="cm">,</span>29%</span></div><div class="c n" style="left:1228px;width:140px"><span class="v">628<span class="cm">,</span>92</span></div><div class="c n" style="left:1368px;width:123px"><span class="v">78</span></div><div class="c n r" style="left:1491px;width:213px"><span class="v">2<span class="ts"> </span>140<span class="cm">,</span>44</span></div><div class="c n r" style="left:1704px;width:204px"><span class="v">265</span></div></div>
<div class="hline" style="top:988.86px"></div>
<div class="row" style="top:989.86px"><div class="c t" style="left:12px;width:199px">Днепр №1</div><div class="c t" style="left:211px;width:475px;padding-left:6px">Арахис Казацкая слава к пиву, смаж.<span class="dg">70</span>г</div><div class="c n" style="left:686px;width:136px"><span class="v">150</span></div><div class="c n" style="left:822px;width:160px"><span class="v">374</span></div><div class="c n" style="left:982px;width:119px"><span class="v">28<span class="cm">,</span>63%</span></div><div class="c n" style="left:1101px;width:127px"><span class="v">71<span class="cm">,</span>37%</span></div><div class="c n" style="left:1228px;width:140px"><span class="v">672<span class="cm">,</span>84</span></div><div class="c n" style="left:1368px;width:123px"><span class="v">54</span></div><div class="c n r" style="left:1491px;width:213px"><span class="v">1<span class="ts"> </span>677<span class="cm">,</span>61</span></div><div class="c n r" style="left:1704px;width:204px"><span class="v">135</span></div></div>
<div class="hline" style="top:1020.44px"></div>
<div class="row" style="top:1021.44px"><div class="c t" style="left:12px;width:199px">Днепр №1</div><div class="c t" style="left:211px;width:475px;padding-left:6px">Арахис Лидер Снек Бэкон <span class="dg">50</span>г</div><div class="c n" style="left:686px;width:136px"><span class="v">399</span></div><div class="c n" style="left:822px;width:160px"><span class="v">125</span></div><div class="c n" style="left:982px;width:119px"><span class="v">76<span class="cm">,</span>15%</span></div><div class="c n" style="left:1101px;width:127px"><span class="v">23<span class="cm">,</span>85%</span></div><div class="c n" style="left:1228px;width:140px"><span class="v">3<span class="ts"> </span>315<span class="cm">,</span>83</span></div><div class="c n" style="left:1368px;width:123px"><span class="v">389</span></div><div class="c n r" style="left:1491px;width:213px"><span class="v">1<span class="ts"> </span>038<span class="cm">,</span>79</span></div><div class="c n r" style="left:1704px;width:204px"><span class="v">122</span></div></div>
<div class="hline" style="top:1052.02px"></div>
<div class="row" style="top:1053.02px"><div class="c t" style="left:12px;width:199px">Днепр №1</div><div class="c t" style="left:211px;width:475px;padding-left:6px">Арахис Лидер Снек Бекон <span class="dg">80</span>г</div><div class="c n" style="left:686px;width:136px"><span class="v">392</span></div><div class="c n" style="left:822px;width:160px"><span class="v">132</span></div><div class="c n" style="left:982px;width:119px"><span class="v">74<span class="cm">,</span>81%</span></div><div class="c n" style="left:1101px;width:127px"><span class="v">25<span class="cm">,</span>19%</span></div><div class="c n" style="left:1228px;width:140px"><span class="v">7<span class="ts"> </span>110<span class="cm">,</span>08</span></div><div class="c n" style="left:1368px;width:123px"><span class="v">544</span></div><div class="c n r" style="left:1491px;width:213px"><span class="v">2<span class="ts"> </span>394<span class="cm">,</span>21</span></div><div class="c n r" style="left:1704px;width:204px"><span class="v">183</span></div></div>
<div class="hline" style="top:1083.60px"></div>
</div>
<div class="abs" style="left:12px;top:1053px;width:1896px;height:15px;background:linear-gradient(180deg,rgba(0,0,0,0.015) 0%,rgba(0,0,0,0.075) 100%)"></div>
<div class="abs" style="left:1887px;top:453px;width:21px;height:615px;background:linear-gradient(90deg,rgba(0,0,0,0) 0%,rgba(0,0,0,0.065) 100%)"></div>

</body></html>
